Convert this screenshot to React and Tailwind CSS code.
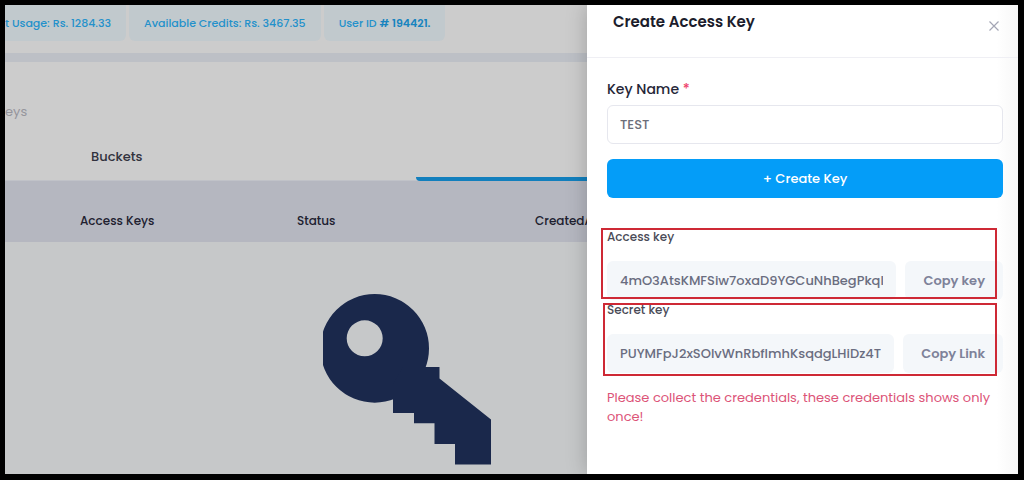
import { useState } from "react";

function Chip({ children }) {
  return (
    <span className="flex items-center rounded-b-md bg-[#c1c9cd] px-[15px] whitespace-nowrap">
      {children}
    </span>
  );
}

function KeyArt() {
  return (
    <svg viewBox="0 0 168 171" className="h-[171px] w-[168px]" role="img" aria-label="Key">
      <path
        fill="#1a284b"
        fillRule="evenodd"
        d="M51.700 .1a54.300 54.300 0 1 0 0 108.600a54.300 54.300 0 1 0 0-108.600ZM41.700 26.300a18 18 0 1 1 0 36a18 18 0 1 1 0-36Z"
      />
      <path
        fill="#1a284b"
        d="M80 73H116.500V84.500L168 125.500V170.500H132V150H111.500V129.300H91V119H70V90Z"
      />
    </svg>
  );
}

function Dashboard() {
  return (
    <main className="flex min-w-0 flex-1 flex-col overflow-hidden bg-[#cccccc]">
      <header className="flex h-12 items-start text-[11px] font-medium text-[#2491cb]">
        <div className="flex h-9 gap-[3px]">
          <span className="flex items-center rounded-br-md bg-[#c1c9cd] pr-[15px] whitespace-nowrap">
            t Usage: Rs. 1284.33
          </span>
          <Chip>Available Credits: Rs. 3467.35</Chip>
          <Chip>
            <span>
              User ID <b className="font-semibold text-[#1784bf]"># 194421.</b>
            </span>
          </Chip>
        </div>
      </header>
      <div className="h-[9px] bg-[#bdc0c6]" />
      <nav className="pt-10 text-[13px] leading-5 text-[#95959c]">
        <span>eys</span>
      </nav>
      <div className="mt-4 flex h-[43px] border-b border-[#c0c2c8] text-[13px] font-medium text-[#31323d]">
        <button type="button" className="w-[411px] pb-1 pl-[86px] text-left">
          Buckets
        </button>
        <button
          type="button"
          aria-label="Access Keys"
          className="-mb-px flex-1 rounded-l-sm border-b-4 border-[#127fbd]"
        />
      </div>
      <table className="w-[700px] table-fixed text-left text-xs text-[#20202f]">
        <thead className="h-[61px] bg-[#b5b7c0]">
          <tr>
            <th className="w-[292px] pt-[29px] pb-[10px] pl-[75px] font-medium">Access Keys</th>
            <th className="w-[238px] pt-[29px] pb-[10px] font-medium">Status</th>
            <th className="pt-[29px] pb-[10px] font-medium">CreatedAt</th>
          </tr>
        </thead>
      </table>
      <div className="flex-1 bg-[#c6c8c9] pt-[52px] pl-[318px]">
        <KeyArt />
      </div>
    </main>
  );
}

function Credential({ id, label, value, action, frame }) {
  return (
    <div className="relative">
      <label htmlFor={id} className="block text-xs leading-5 font-medium text-[#4a4b57]">
        {label}
      </label>
      <div className="mt-[14px] flex h-[39px] gap-[9px]">
        <input
          id={id}
          readOnly
          value={value}
          className="min-w-0 flex-1 rounded-md bg-[#f4f7fa] px-[13px] text-[13px] font-medium text-[#6a6d80] outline-none"
        />
        <button
          type="button"
          onClick={() => navigator.clipboard?.writeText(value)}
          className="rounded-md bg-[#f4f7fa] px-[18px] text-[13px] font-semibold whitespace-nowrap text-[#7e8299]"
        >
          {action}
        </button>
      </div>
      <div className={"pointer-events-none absolute border-2 border-[#ce2935] " + frame} />
    </div>
  );
}

function Drawer() {
  const [name, setName] = useState("TEST");
  return (
    <aside className="relative w-[431px] shrink-0 bg-white bg-linear-to-l from-[#f7f7f7] to-white to-5% shadow-[0_0_20px_rgba(0,0,0,0.22)]">
      <header className="flex h-[53px] items-start justify-between border-b border-[#efeff4] pt-[5px] pr-[19px] pl-[26px]">
        <h2 className="text-[15px] leading-6 font-semibold text-[#1c1d2c]">Create Access Key</h2>
        <button type="button" aria-label="Close" className="mt-[11px]">
          <svg viewBox="0 0 10 10" className="size-[10px]" fill="none" stroke="#a4a6b5" strokeWidth="1.200">
            <path d="M.5.5l9 9M9.500.5l-9 9" />
          </svg>
        </button>
      </header>
      <div className="pt-[21px] pr-[15px] pl-5">
        <label htmlFor="key-name" className="block text-sm leading-5 font-medium text-[#252637]">
          Key Name <span className="text-[#ee3f6b]">*</span>
        </label>
        <input
          id="key-name"
          value={name}
          onChange={(e) => setName(e.target.value)}
          className="mt-[6px] block h-[39px] w-full rounded-md border border-[#e6e7ee] bg-white px-3 text-[13px] font-medium text-[#6c6e79] outline-none"
        />
        <button
          type="button"
          className="mt-[15px] mb-[29px] h-[39px] w-full rounded-md bg-[#049df8] text-[13px] font-medium text-white"
        >
          + Create Key
        </button>
        <Credential
          id="access-key"
          label="Access key"
          value="4mO3AtsKMFSiw7oxaD9YGCuNhBegPkql"
          action="Copy key"
          frame="top-px -left-[6px] right-[6px] h-[71px]"
        />
        <Credential
          id="secret-key"
          label="Secret key"
          value="PUYMFpJ2xSOlvWnRbfImhKsqdgLHiDz4T"
          action="Copy Link"
          frame="top-[3px] -left-1 right-[6px] h-[73px]"
        />
        <p className="mt-[15px] text-[13px] leading-[19px] text-[#dc5478]">
          Please collect the credentials, these credentials shows only once!
        </p>
      </div>
    </aside>
  );
}

export default function App() {
  return (
    <div className="flex min-h-screen bg-black pt-[5px] pr-[6px] pb-[6px] pl-[5px] font-[Poppins,Inter,sans-serif]">
      <Dashboard />
      <Drawer />
    </div>
  );
}
